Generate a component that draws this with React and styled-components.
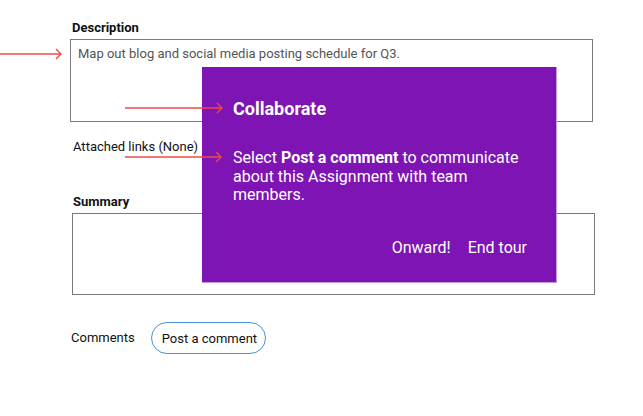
import React from "react";
import styled, { createGlobalStyle } from "styled-components";

const Global = createGlobalStyle`
  html, body { margin: 0; padding: 0; background: #fff; }
  body { font-family: Roboto, "Liberation Sans", Arial, sans-serif; color: #111; }
`;

const Page = styled.div`
  position: relative;
  width: 643px;
  height: 416px;
  overflow: hidden;
  padding: 20px 0 0 70px;
  box-sizing: border-box;
  display: flex;
  flex-direction: column;
  align-items: flex-start;
`;

const Label = styled.div`
  font-size: 13px;
  font-weight: 700;
  line-height: 16px;
  margin-left: ${(p) => p.$indent || 0}px;
  margin-top: ${(p) => p.$top || 0}px;
`;

const Field = styled.div`
  box-sizing: border-box;
  width: 523px;
  height: ${(p) => p.$h}px;
  border: 1px solid #7a7a7a;
  margin-left: ${(p) => p.$indent || 0}px;
  margin-top: ${(p) => p.$top || 0}px;
  padding: 5px 7px;
  font-size: 13px;
  line-height: 17px;
  color: #555;
`;

const Plain = styled.div`
  font-size: 13px;
  line-height: 16px;
  color: #111;
  margin-left: ${(p) => p.$indent || 0}px;
  margin-top: ${(p) => p.$top || 0}px;
`;

const CommentsRow = styled.div`
  display: flex;
  align-items: center;
  gap: 16px;
  margin-top: 27px;
  margin-left: 1px;
`;

const PillButton = styled.button`
  box-sizing: border-box;
  height: 32px;
  padding: 0 8px 0 10px;
  border: 1.5px solid #4a8fdc;
  border-radius: 16px;
  background: #fff;
  font-family: inherit;
  font-size: 13px;
  color: #111;
`;

const Tour = styled.div`
  position: absolute;
  left: 202px;
  top: 67px;
  width: 355px;
  height: 216px;
  box-sizing: border-box;
  background: #7d14b3;
  border-right: 1px solid #c497e0;
  border-bottom: 1px solid #c497e0;
  padding: 31px 29px 0 31px;
  color: #fff;
  display: flex;
  flex-direction: column;
`;

const TourTitle = styled.div`
  font-size: 18px;
  font-weight: 700;
  line-height: 22px;
`;

const TourBody = styled.div`
  margin-top: 29px;
  font-size: 16px;
  line-height: 18.5px;
  b { font-weight: 700; }
`;

const TourActions = styled.div`
  display: flex;
  justify-content: flex-end;
  gap: 17px;
  margin-top: 33px;
`;

const TourButton = styled.span`
  font-size: 16px;
  line-height: 20px;
  color: #fff;
`;

const Arrow = styled.svg`
  position: absolute;
  left: ${(p) => p.$x}px;
  top: ${(p) => p.$y - 6}px;
  overflow: visible;
`;

function RedArrow({ x, y, len }) {
  return (
    <Arrow $x={x} $y={y} width={len} height="12" viewBox={`0 0 ${len} 12`}>
      <line x1="0" y1="6" x2={len - 1} y2="6" stroke="#f04848" strokeWidth="1.4" />
      <polyline
        points={`${len - 6},1 ${len - 1},6 ${len - 6},11`}
        fill="none"
        stroke="#f04848"
        strokeWidth="1.4"
      />
    </Arrow>
  );
}

export default function App() {
  return (
    <>
      <Global />
      <Page>
        <Label $indent={2}>Description</Label>
        <Field $h={83} $top={3}>
          Map out blog and social media posting schedule for Q3.
        </Field>
        <Plain $indent={3} $top={17}>Attached links (None)</Plain>
        <Label $indent={3} $top={39}>Summary</Label>
        <Field $h={82} $top={3} $indent={2} />
        <CommentsRow>
          <Plain>Comments</Plain>
          <PillButton>Post a comment</PillButton>
        </CommentsRow>

        <Tour>
          <TourTitle>Collaborate</TourTitle>
          <TourBody>
            Select <b>Post a comment</b> to communicate about this Assignment with team
            members.
          </TourBody>
          <TourActions>
            <TourButton>Onward!</TourButton>
            <TourButton>End tour</TourButton>
          </TourActions>
        </Tour>

        <RedArrow x={0} y={54} len={62} />
        <RedArrow x={125} y={108} len={98} />
        <RedArrow x={125} y={157} len={97} />
      </Page>
    </>
  );
}
